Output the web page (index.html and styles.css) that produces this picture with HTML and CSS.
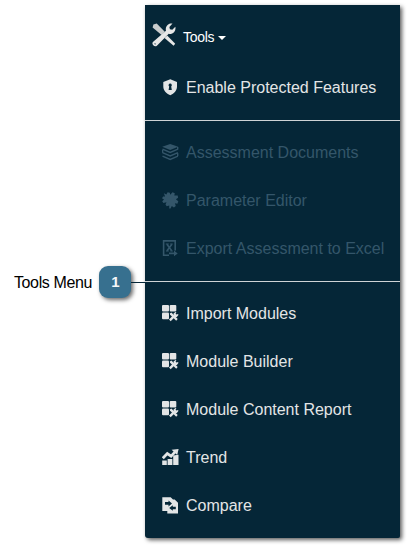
FILE: index.html
```
<!DOCTYPE html>
<html lang="en">
<head>
<meta charset="utf-8">
<title>Tools Menu</title>
<link rel="stylesheet" href="styles.css">
</head>
<body>
<svg class="defs" aria-hidden="true">
  <symbol id="modules" viewBox="0 0 17 17">
    <rect x="0" y="0" width="7" height="6.5" rx="1"/><rect x="7.7" y="0" width="6.6" height="6.5" rx="1"/><rect x="0" y="7.4" width="7" height="6.8" rx="1"/>
    <path d="M7.8 8.5l1.6-.9 6.3 6.4-1.5 1.8-6.1-6z"/>
    <path d="M7 14.6l3.7-3.9.9-.6-.1-1.5 2-1.7.9.3-.8 1.5.9.9 1.6-.7.3 1.1-1.6 1.9-1.9.1-4.2 4.2z"/>
  </symbol>
</svg>
<main class="page">
  <aside class="callout">
    <span class="callout-text">Tools Menu</span>
    <span class="badge">1</span>
    <span class="leader"></span>
  </aside>
  <nav class="menu">
    <header class="menu-head">
      <svg class="tools" viewBox="0 0 24 24">
        <path d="M1.4 1.6L4.7.4l8.1 8.4-3.2 3.3L.6 4.4z" fill="#c9cccd"/>
        <path d="M15.2 12.6l8 8.2-1.6 1.9-9.1-7.7z"/>
        <path d="M.9 18.9L14 7.7c-.8-2.8.5-5.9 3.4-7 1.2-.4 2.2-.4 3.1-.1l-3.1 3.3.5 2.3 2.4.5 3-3c.9 3.5-1.2 6.8-4.4 7.3-.8.1-1.6 0-2.2-.2L4.9 22.8C2.4 24.7-.9 21.1.9 18.9zm1.6 1.5c-.3.7.6 1.4 1.1.8.4-.7-.5-1.4-1.1-.8z" fill-rule="evenodd"/>
      </svg>
      <span>Tools</span><i class="caret"></i>
    </header>
    <ul>
      <li><svg class="icon" viewBox="0 0 17 17"><path fill-rule="evenodd" d="M8.3.2L15 3v4.5c0 4-2.8 7-6.7 8.8C4.2 14.5 1.3 11.5 1.3 7.5V3zM8.2 4.6C6.6 4.6 6 6.7 7.2 7.6L6.6 11h3.2l-.6-3.4c1.2-.9.6-3-1-3z"/></svg><span>Enable Protected Features</span></li>
    </ul>
    <hr>
    <ul class="disabled">
      <li><svg class="icon" viewBox="0 0 17 17"><path d="M8.2 0l8 2.8-8 3.2L.2 2.8z"/><path d="M.5 5.2l7.7 3.3 7.7-3.3M.5 8.7L8.2 12l7.7-3.3M.5 12.1l7.7 3.3 7.7-3.3M15.7 3v2.4M.6 6v2.7M15.7 9.3v2.6" fill="none" stroke="currentColor" stroke-width="1.4"/></svg><span>Assessment Documents</span></li>
      <li><svg class="icon" viewBox="0 0 17 17"><path d="M1.8 1.2l2.6 1.2L5.6.3l2.2.5.4 2L10.5.3l2.3 1-.5 2.3 3.4-.1.4 2.2-2.2 1.5 2.4 2.1-.9 2.4-2.5-.4.9 2.6-1.9 1.6-2.1-1.4-1.3 2.3H7.2l.1-3-2.6.9-1.2-1.8 1-2.3-3.1.7L.2 9.3l1.8-1.7L0 6.2l1.1-1.7 2 .1z"/></svg><span>Parameter Editor</span></li>
      <li><svg class="icon" viewBox="0 0 17 17"><path d="M7 15.3H1.6V.9h11.6v9.5M4.9 4.2l4.8 6.6M9.9 4.2L5 10.8" fill="none" stroke="currentColor" stroke-width="1.6"/><path d="M3.8 4h3M8.2 4h2.5M4 11h2.8M8.3 11h2.5" stroke="currentColor"/><path d="M7 12.5h5v-2l3.7 2.9-3.7 2.8v-2H7z"/></svg><span>Export Assessment to Excel</span></li>
    </ul>
    <hr>
    <ul>
      <li><svg class="icon"><use href="#modules"/></svg><span>Import Modules</span></li>
      <li><svg class="icon"><use href="#modules"/></svg><span>Module Builder</span></li>
      <li><svg class="icon"><use href="#modules"/></svg><span>Module Content Report</span></li>
      <li><svg class="icon" viewBox="0 0 17 17"><path d="M.2 11.5h4.6V16H.2zM5.6 9.9h4.8V16H5.6zM11.2 6.5l5.3-.8V16h-5.3z"/><path d="M.8 9.2l4.5-4.7 3.8 2.7 4-4.3" fill="none" stroke="currentColor" stroke-width="2.8"/><path d="M9.6.7L16.6 0l-1.4 5.9z"/></svg><span>Trend</span></li>
      <li><svg class="icon" viewBox="0 0 17 17"><path fill-rule="evenodd" d="M.3.2h8.4L11 2.5h1.7L16 5.8v10.7H5.3V14H.3zM3 5v2.8h3.5v1.6L10 6.5 6.5 3.6V5zM13.8 9.7h-3V8.2L7.2 11l3.6 2.8v-1.5h3z"/></svg><span>Compare</span></li>
    </ul>
  </nav>
</main>
</body>
</html>
```
FILE: styles.css
```
body {
  margin: 0;
  background: #fff;
  font: 16px/20px "Liberation Sans", Arial, sans-serif;
  overflow: hidden;
}
.defs {
  display: block;
  width: 0;
  height: 0;
}
.page {
  display: flex;
  width: 409px;
  height: 547px;
}
.callout {
  display: flex;
  align-items: center;
  align-self: flex-start;
  justify-content: flex-end;
  width: 145px;
  height: 32px;
  margin-top: 266px;
  color: #000;
}
.callout-text {
  margin-right: 7px;
  padding-top: 2px;
  letter-spacing: -.38px;
  white-space: nowrap;
}
.badge {
  flex: none;
  width: 32px;
  height: 32px;
  border-radius: 9px;
  background: #37708f;
  box-shadow: 2px 2px 4px rgba(0, 0, 0, .6);
  color: #f4f7f9;
  font-size: 15px;
  font-weight: bold;
  line-height: 32px;
  text-indent: 1px;
  text-align: center;
}
.leader {
  flex: none;
  width: 14px;
  height: 1px;
  background: #052638;
  z-index: 1;
}
.menu {
  width: 255px;
  height: 533px;
  margin-top: 5px;
  border-radius: 0 0 2px 3px;
  background: #052637;
  box-shadow: 2px 2px 4px rgba(0, 0, 0, .65);
  color: #e3e5e6;
}
.menu-head {
  display: flex;
  align-items: center;
  height: 58px;
  padding-left: 7px;
  box-sizing: border-box;
  font-size: 14px;
  letter-spacing: -.3px;
  color: #fff;
}
.menu-head span {
  padding-top: 6px;
}
.tools {
  width: 24px;
  height: 24px;
  margin: 2px 7px 0 0;
  fill: #e6e6e6;
}
.caret {
  margin: 7px 0 0 4px;
  border: 4px solid transparent;
  border-top-color: #fff;
  border-bottom: 0;
}
ul {
  margin: 0;
  padding: 0;
  list-style: none;
}
li {
  display: flex;
  align-items: center;
  height: 48px;
  padding-left: 17px;
  white-space: nowrap;
}
li span {
  padding-top: 2px;
}
.icon {
  width: 17px;
  height: 17px;
  margin-right: 7px;
  fill: currentColor;
}
.disabled {
  color: #34566a;
}
hr {
  height: 1px;
  margin: 9px 0 7px;
  border: 0;
  background: #cfd3d5;
}
```
